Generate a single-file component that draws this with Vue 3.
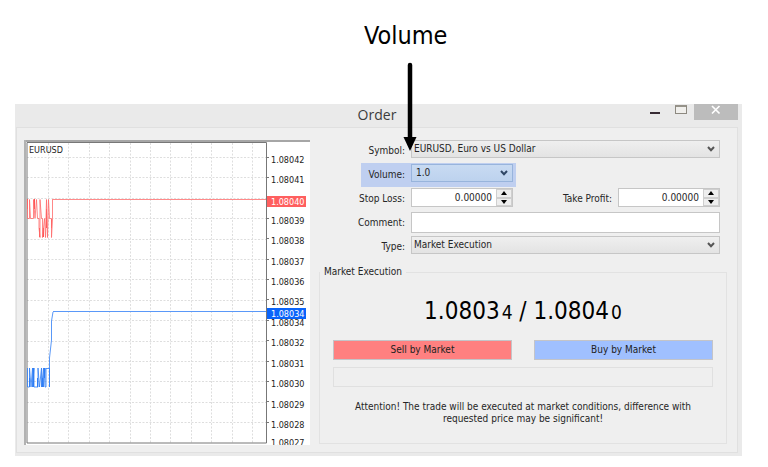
<script setup>
import { ref } from 'vue'

const symbol = ref('EURUSD, Euro vs US Dollar')
const volume = ref('1.0')
const stopLoss = ref('0.00000')
const takeProfit = ref('0.00000')
const comment = ref('')
const type = ref('Market Execution')

const columns = Array.from({ length: 11 }, (_, i) => Math.round(24 + i * 20.4) + 0.5)
const rows = Array.from({ length: 14 }, (_, i) => Math.round(17 + i * 20.4) + 0.5)

const ticks = [
  ['1.08042', 24], ['1.08041', 44], ['1.08039', 85], ['1.08038', 105],
  ['1.08037', 126], ['1.08036', 146], ['1.08035', 166], ['1.08034', 187],
  ['1.08032', 207], ['1.08031', 228], ['1.08030', 248], ['1.08029', 269],
  ['1.08028', 289], ['1.08027', 307],
].map(([label, y]) => ({ label, y }))
</script>

<template>
  <main class="page">
    <section class="window">
      <header class="titlebar">
        <span></span>
        <h1>Order</h1>
        <div class="controls">
          <button class="ctl" aria-label="Minimize">
            <svg width="12" height="16" viewBox="0 0 12 16"><path d="M1 9h10" stroke="#382c34" stroke-width="2" /></svg>
          </button>
          <button class="ctl" aria-label="Maximize">
            <svg width="12" height="16" viewBox="0 0 12 16"><rect x=".5" y="2" width="11" height="7.500" fill="#f0efec" stroke="#8d8980" /><path d="M0 2h12" stroke="#8d8980" stroke-width="1.600" /></svg>
          </button>
          <button class="ctl close" aria-label="Close">
            <svg width="12" height="16" viewBox="0 0 12 16"><path d="M2 2l7.500 7.500m0-7.500L2 9.500" stroke="#fff" stroke-width="1.700" /></svg>
          </button>
        </div>
      </header>

      <div class="body">
        <div class="chart">
          <svg viewBox="0 0 286 305" role="img" aria-label="EURUSD tick chart">
            <rect width="286" height="305" fill="#fff" />
            <g stroke="#dedede" stroke-dasharray="2 1.5">
              <path v-for="x in columns" :key="'c' + x" :d="`M${x} 3V303`" />
              <path v-for="y in rows" :key="'r' + y" :d="`M3 ${y}H242`" />
            </g>
            <path d="M0 1H286" stroke="#a6a6a6" stroke-width="2" />
            <path d="M1 0V305" stroke="#b2b2b2" stroke-width="2" />
            <path d="M3 2.500H242.500V303H3V2.500" fill="none" stroke="#777" />
            <path d="M243 17.500h2M243 37.500h2M243 78.500h2M243 98.500h2M243 119.500h2M243 139.500h2M243 159.500h2M243 180.500h2M243 200.500h2M243 221.500h2M243 241.500h2M243 261.500h2M243 282.500h2" stroke="#777" />
            <text x="5" y="13" class="tick">EURUSD</text>
            <path d="M3.500 59V69M10.500 59V69M15.500 88V97M19.500 88V97M22.500 69V88M27.500 79V88" stroke="#ff5050" />
            <path
              d="M3.500 59.500V78.500H5.500V59.500L6.500 78.500H9.500V59.500L11 78L12.500 59.500L13.500 78.500H15V88L16 97.500V59.500L17.500 78.500H18.500V97.500L20.500 78.500L21.500 97.500L22.500 59.500L23.500 97.500L24.500 59.500L25.500 78.500H27.500V97.500L28.500 78.500V59.500"
              fill="none" stroke="#ff6a6a" stroke-width=".8" />
            <rect x="28" y="59" width="214" height="1" fill="#ff8a8a" />
            <path d="M5.500 238V247M9.500 228V247M13.500 238V247M18.500 238V247M20.500 228V238" stroke="#2f7df5" />
            <path
              d="M3.500 228V247H5.500V228L7 247L8.500 228V247L10 228V247H14V228L15.500 247L17.500 228V247L19.500 228V247L21 228V247H22V228.500H25.500V247V218L26.500 209L27.500 200V181L29 172"
              fill="none" stroke="#2f7df5" stroke-width=".8" />
            <rect x="29" y="171" width="213" height="1" fill="#5a98f8" />
            <g class="tick">
              <text v-for="t in ticks" :key="t.label" x="247" :y="t.y - 1">{{ t.label }}</text>
            </g>
            <rect x="243" y="56" width="39" height="11" fill="#ff5f5f" />
            <rect x="243" y="168" width="39" height="11" fill="#0a64fa" />
            <g class="tick tag">
              <text x="247" y="65">1.08040</text>
              <text x="247" y="177">1.08034</text>
            </g>
          </svg>
        </div>

        <form class="form" @submit.prevent>
          <div class="row">
            <label for="symbol">Symbol:</label>
            <div class="field wide">
              <select id="symbol" v-model="symbol"><option>EURUSD, Euro vs US Dollar</option></select>
              <svg class="chevron" width="8" height="6" viewBox="0 0 8 6"><path d="M1 1l3 3.200L7 1" /></svg>
            </div>
          </div>
          <div class="row marked">
            <label for="volume">Volume:</label>
            <div class="field">
              <select id="volume" v-model="volume"><option>1.0</option></select>
              <svg class="chevron" width="8" height="6" viewBox="0 0 8 6"><path d="M1 1l3 3.200L7 1" /></svg>
            </div>
          </div>
          <div class="row">
            <label for="sl">Stop Loss:</label>
            <div class="field spin">
              <input id="sl" v-model="stopLoss" type="text" />
              <div class="steps">
                <button type="button" aria-label="Increase stop loss"><svg width="6" height="4" viewBox="0 0 6 4"><path d="M0 4l3-4 3 4z" /></svg></button>
                <button type="button" aria-label="Decrease stop loss"><svg width="6" height="4" viewBox="0 0 6 4"><path d="M0 0l3 4 3-4z" /></svg></button>
              </div>
            </div>
            <label for="tp">Take Profit:</label>
            <div class="field spin">
              <input id="tp" v-model="takeProfit" type="text" />
              <div class="steps">
                <button type="button" aria-label="Increase take profit"><svg width="6" height="4" viewBox="0 0 6 4"><path d="M0 4l3-4 3 4z" /></svg></button>
                <button type="button" aria-label="Decrease take profit"><svg width="6" height="4" viewBox="0 0 6 4"><path d="M0 0l3 4 3-4z" /></svg></button>
              </div>
            </div>
          </div>
          <div class="row">
            <label for="comment">Comment:</label>
            <div class="field wide"><input id="comment" v-model="comment" type="text" /></div>
          </div>
          <div class="row">
            <label for="type">Type:</label>
            <div class="field wide">
              <select id="type" v-model="type"><option>Market Execution</option></select>
              <svg class="chevron" width="8" height="6" viewBox="0 0 8 6"><path d="M1 1l3 3.200L7 1" /></svg>
            </div>
          </div>

          <fieldset>
            <legend>Market Execution</legend>
            <p class="price">1.0803<small>4</small> / 1.0804<small>0</small></p>
            <div class="actions">
              <button type="button" class="sell">Sell by Market</button>
              <button type="button" class="buy">Buy by Market</button>
            </div>
            <div class="status"></div>
            <p class="notice">Attention! The trade will be executed at market conditions, difference with requested price may be significant!</p>
          </fieldset>
        </form>
      </div>
    </section>

    <div class="callout">
      <span>Volume</span>
      <svg width="16" height="92" viewBox="0 0 16 92"><path d="M8 4V80" stroke="#000" stroke-width="4.500" stroke-linecap="round" /><path d="M1.500 76h13L8 90z" /></svg>
    </div>
  </main>
</template>

<style>
body {
  background: #fff;
}
</style>

<style scoped>
.page {
  position: relative;
  padding: 104px 26px 11px 15px;
  font: 10px/12px "DejaVu Sans Condensed", "Noto Sans", sans-serif;
  color: #262626;
}
.window {
  padding: 0 4px 3px 1px;
  background: #eaeaea;
}
.titlebar {
  display: grid;
  grid-template-columns: 1fr auto 1fr;
  height: 23px;
}
h1 {
  margin: 0;
  font: 14px/22px "Open Sans", sans-serif;
  color: #3c3c3c;
}
.controls {
  display: flex;
  justify-content: flex-end;
  align-items: flex-start;
}
.ctl {
  width: 26px;
  height: 16px;
  padding: 0;
  border: 0;
  background: none;
}
.ctl svg {
  display: block;
  margin: 0 auto;
}
.close {
  width: 44px;
  background: #bcbcbc;
}
.body {
  display: grid;
  grid-template-columns: 286fr 408fr;
  gap: 9px;
  padding: 12px 10px 7px 7px;
  border: 1px solid #e0e0e0;
  background: #efefef;
}
.chart svg {
  display: block;
  width: 100%;
}
.tick {
  font-size: 9px;
  fill: #222;
}
.tag {
  fill: #fff;
}
.form {
  display: flex;
  flex-direction: column;
  gap: 5px;
}
.row {
  display: grid;
  grid-template-columns: 86px 102px 1fr 102px;
  column-gap: 6px;
  height: 19px;
  padding-right: 7px;
  position: relative;
}
.row label {
  text-align: right;
  line-height: 21px;
  position: relative;
}
.field {
  position: relative;
  display: flex;
}
.wide {
  grid-column: 2 / 5;
}
select,
input {
  flex: 1;
  min-width: 0;
  width: 100%;
  height: 19px;
  margin: 0;
  padding: 0 2px;
  border: 1px solid #c6c6c6;
  border-radius: 0;
  appearance: none;
  font: inherit;
  color: inherit;
  background: #fff;
  outline: 0;
}
select {
  height: 18px;
  background: linear-gradient(#efefef, #e3e3e3);
}
.chevron {
  position: absolute;
  right: 5px;
  top: 6px;
  fill: none;
  stroke: #555;
  stroke-width: 2;
  pointer-events: none;
}
.marked::before {
  content: "";
  position: absolute;
  left: 42px;
  top: -1px;
  width: 155px;
  height: 24px;
  background: #bfcff0;
}
.marked select {
  padding-left: 4px;
  border-color: #98b4dc;
  background: linear-gradient(#c8daf2, #bdd2ee);
}
.marked .chevron {
  stroke: #304766;
}
.spin {
  border: 1px solid #c6c6c6;
  background: #fff;
  height: 17px;
}
.spin input {
  height: 17px;
  border: 0;
  text-align: right;
  padding: 0 4px;
}
.steps {
  display: grid;
  grid-template-rows: 1fr 1fr;
  width: 16px;
  background: #efefef;
}
.steps button {
  display: flex;
  align-items: center;
  justify-content: center;
  padding: 0;
  border: 1px solid #cfcfcf;
  background: #eee;
}
fieldset {
  min-width: 0;
  margin: 5px 0 0;
  padding: 16px 13px 18px;
  border: 1px solid #e2e2e2;
}
legend {
  margin-left: -13px;
  padding: 0 4px;
  line-height: 14px;
}
.price {
  margin: 0;
  text-align: center;
  font-size: 24px;
  line-height: 32px;
  color: #000;
}
small {
  margin-left: 2px;
  font-size: 19px;
}
.actions {
  display: grid;
  grid-template-columns: 1fr 1fr;
  gap: 22px;
  margin-top: 12px;
}
.actions button {
  height: 20px;
  padding: 0;
  border: 1px solid #c4c4c8;
  font: inherit;
  color: #222;
}
.sell {
  background: #ff8080;
}
.buy {
  background: #a0c0ff;
}
.status {
  height: 18px;
  margin-top: 7px;
  border: 1px solid #e0e0e0;
}
.notice {
  margin: 14px 20px 0;
  text-align: center;
}
.callout {
  position: absolute;
  left: 364px;
  top: 20px;
  font-size: 25px;
  line-height: 32px;
  color: #000;
}
.callout span {
  display: block;
}
.callout svg {
  display: block;
  margin: 9px 0 0 38px;
}
</style>
